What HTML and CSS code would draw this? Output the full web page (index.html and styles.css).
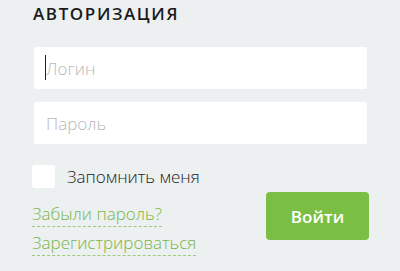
FILE: index.html
```html
<!DOCTYPE html>
<html lang="ru">
<head>
  <meta charset="UTF-8">
  <meta name="viewport" content="width=device-width, initial-scale=1.0">
  <title>Авторизация</title>
  <link rel="stylesheet" href="styles.css">
</head>
<body>
  <!-- форма входа -->
  <div class="auth">
    <h1 class="auth-title">АВТОРИЗАЦИЯ</h1>

    <div class="field"><span class="caret"></span><span class="placeholder">Логин</span></div>
    <div class="field"><span class="placeholder">Пароль</span></div>

    <div class="auth-bottom">
      <div class="auth-left">
        <label class="remember">
          <span class="checkbox"></span>
          <span>Запомнить меня</span>
        </label>
        <a class="link" href="#">Забыли пароль?</a>
        <a class="link" href="#">Зарегистрироваться</a>
      </div>
      <button class="btn-login">Войти</button>
    </div>
  </div>
</body>
</html>
```

FILE: styles.css
```css
/* базовые настройки */
body {
  margin: 0;
  background-color: #edf0f1;
  font-family: "Open Sans", "Noto Sans", sans-serif;
  color: #222;
}

.auth {
  width: 333px;
  padding: 0 0 0 34px;
}

.auth-title {
  margin: 3px 0 22px -1px;
  font-size: 17px;
  font-weight: 600;
  letter-spacing: 1.6px;
  line-height: 22px;
  color: #1a1a1a;
}

/* поля ввода */
.field {
  position: relative;
  height: 42px;
  background-color: #fff;
  border-radius: 2px;
  margin-bottom: 13px;
  display: flex;
  align-items: center;
  padding-left: 12px;
}

.placeholder {
  font-size: 17px;
  font-weight: 300;
  color: #b8b8b8;
}

.caret {
  position: absolute;
  left: 11px;
  top: 8px;
  width: 1px;
  height: 25px;
  background-color: #222;
}

/* нижняя часть */
.auth-bottom {
  display: flex;
  justify-content: space-between;
  align-items: flex-start;
  margin-top: 21px;
}

.auth-left {
  display: flex;
  flex-direction: column;
  align-items: flex-start;
  margin-left: -2px;
}

.remember {
  display: flex;
  align-items: center;
  gap: 12px;
  font-size: 17px;
  font-weight: 300;
  color: #222;
  margin-bottom: 14px;
}

.checkbox {
  width: 23px;
  height: 23px;
  background-color: #fff;
  border-radius: 3px;
}

.link {
  font-size: 17px;
  font-weight: 300;
  color: #78b646;
  text-decoration: none;
  border-bottom: 1px dashed #9cc97a;
  line-height: 24px;
  margin-bottom: 4px;
}

.btn-login {
  margin-top: 27px;
  margin-right: -2px;
  width: 103px;
  height: 48px;
  border: none;
  border-radius: 4px;
  background-color: #7abf43;
  color: #fff;
  font-family: "Open Sans", "Noto Sans", sans-serif;
  font-size: 17px;
  font-weight: 600;
}
```
